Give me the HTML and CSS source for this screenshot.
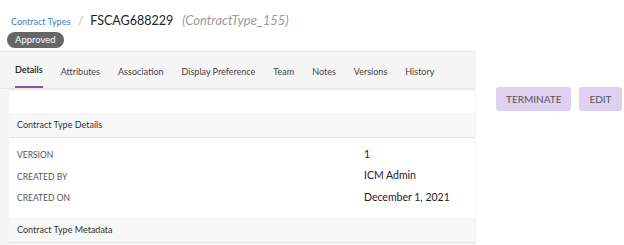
FILE: index.html
```html
<!DOCTYPE html>
<html lang="en">
<head>
    <meta charset="UTF-8">
    <title>FSCAG688229</title>
    <link rel="stylesheet" href="styles.css">
</head>
<body>
    <div class="header">
        <div class="crumbs">
            <a class="crumb-link" href="#">Contract Types</a>
            <span class="sep">/</span>
            <span class="title">FSCAG688229</span>
            <span class="subtitle">(ContractType_155)</span>
        </div>
        <span class="badge">Approved</span>
    </div>

    <div class="main">
        <div class="panel">
            <div class="tabs">
                <span class="tab active">Details</span>
                <span class="tab">Attributes</span>
                <span class="tab">Association</span>
                <span class="tab">Display Preference</span>
                <span class="tab">Team</span>
                <span class="tab">Notes</span>
                <span class="tab">Versions</span>
                <span class="tab">History</span>
            </div>
            <div class="card">
                <div class="section-head">Contract Type Details</div>
                <div class="rows">
                    <div class="row"><span class="label">Version</span><span class="value">1</span></div>
                    <div class="row"><span class="label">Created By</span><span class="value">ICM Admin</span></div>
                    <div class="row"><span class="label">Created On</span><span class="value">December 1, 2021</span></div>
                </div>
                <div class="section-head">Contract Type Metadata</div>
            </div>
        </div>
        <div class="actions">
            <button class="btn">TERMINATE</button>
            <button class="btn">EDIT</button>
        </div>
    </div>
</body>
</html>
```

FILE: styles.css
```css
body {
    margin: 0;
    font-family: Lato, "Open Sans", sans-serif;
    background-color: #fff;
    color: #222;
}
.header {
    display: flex;
    flex-direction: column;
    align-items: flex-start;
    padding: 9px 7px 0 7px;
    height: 43px;
}
.crumbs {
    display: flex;
    align-items: baseline;
    padding-left: 4px;
    height: 23px;
    line-height: 23px;
}
.crumb-link {
    color: #3d80c6;
    font-size: 9px;
    text-decoration: none;
}
.sep {
    color: #aaa;
    font-size: 11px;
    margin: 0 7px 0 8px;
}
.title {
    font-size: 12.5px;
    color: #222;
}
.subtitle {
    font-size: 13px;
    font-style: italic;
    color: #9a9a9a;
    margin-left: 9px;
}
.badge {
    background-color: #666;
    color: #fff;
    font-size: 9.5px;
    line-height: 16px;
    padding: 0 8px;
    border-radius: 8px;
}
.main {
    display: flex;
    align-items: flex-start;
}
.panel {
    width: 475px;
    background-color: #f5f5f5;
    box-shadow: 0 -1px 2px rgba(0, 0, 0, 0.12);
    padding-bottom: 6px;
}
.tabs {
    display: flex;
    gap: 18px;
    padding: 0 15px;
    height: 36px;
    border-bottom: 1px solid #e6e6e6;
    white-space: nowrap;
}
.tab {
    font-size: 9px;
    color: #444;
    line-height: 39px;
}
.tab.active {
    color: #222;
    font-weight: 600;
    border-bottom: 2px solid #7a5aa8;
    line-height: 35px;
}
.card {
    margin: 2px 0 0 9px;
    background-color: #fff;
    padding-top: 22px;
}
.section-head {
    background-color: #f7f7f7;
    border-bottom: 1px solid #e2e2e2;
    font-size: 9px;
    color: #333;
    padding: 0 8px;
    line-height: 24px;
}
.rows {
    padding: 5px 0 10px 0;
}
.row {
    display: flex;
    align-items: center;
    height: 21.5px;
}
.label {
    width: 347px;
    padding-left: 8px;
    padding-top: 3px;
    font-size: 8.5px;
    text-transform: uppercase;
    color: #555;
}
.value {
    font-size: 10.5px;
    color: #222;
}
.actions {
    display: flex;
    gap: 8px;
    margin: 35px 0 0 21px;
}
.btn {
    font-family: inherit;
    background-color: #ddd0f0;
    color: #555;
    border: none;
    border-radius: 3px;
    font-size: 10px;
    height: 24px;
    padding: 0 10px;
}
```
